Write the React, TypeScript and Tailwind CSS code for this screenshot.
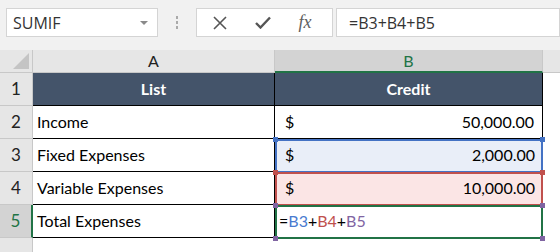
import React from "react";

const cellFont = { fontFamily: "Lato, 'Liberation Sans', sans-serif" };

function Corner({ className }: { className: string }) {
  return <div className={`absolute w-[5px] h-[5px] ${className}`} />;
}

export default function App() {
  return (
    <div className="w-[560px] h-[252px] overflow-hidden bg-white" style={{ fontFamily: "'Open Sans', 'Noto Sans', sans-serif" }}>
      {/* toolbar */}
      <div className="h-[50px] bg-[#f1f1f1] flex items-start pt-[8px]">
        <div className="ml-[6px] w-[152px] h-[29px] bg-white border border-[#d4d4d4] flex items-center justify-between pl-[6px] pr-[8px]">
          <span className="text-[16px] text-[#333]">SUMIF</span>
          <svg width="10" height="6" viewBox="0 0 10 6"><path d="M1 1 L5 5 L9 1 Z" fill="#8a8a8a" /></svg>
        </div>
        <div className="w-[38px] h-[29px] flex flex-col items-center justify-center gap-[2px]">
          <div className="w-[2px] h-[3px] bg-[#aaaaaa]" />
          <div className="w-[2px] h-[3px] bg-[#aaaaaa]" />
          <div className="w-[2px] h-[3px] bg-[#aaaaaa]" />
        </div>
        <div className="w-[137px] h-[29px] bg-white border border-[#d4d4d4] flex items-center">
          <div className="w-[46px] flex justify-center">
            <svg width="14" height="14" viewBox="0 0 14 14"><path d="M1 1 L13 13 M13 1 L1 13" stroke="#555" strokeWidth="1.6" /></svg>
          </div>
          <div className="w-[40px] flex justify-center">
            <svg width="16" height="13" viewBox="0 0 16 13"><path d="M1 7 L5.5 11.5 L15 1.5" stroke="#555" strokeWidth="2.4" fill="none" /></svg>
          </div>
          <div className="w-[44px] flex justify-center">
            <span className="italic text-[18px] text-[#606060]" style={{ fontFamily: "'Liberation Serif', serif" }}>fx</span>
          </div>
        </div>
        <div className="ml-[3px] flex-1 h-[29px] bg-white border border-[#d4d4d4] flex items-center pl-[12px]">
          <span className="text-[16px] text-[#333]">=B3+B4+B5</span>
        </div>
      </div>

      {/* sheet */}
      <div className="relative grid grid-cols-[33px_242px_268px_1fr] grid-rows-[23px_33px_33px_33px_33px_33px_14px]" style={cellFont}>
        {/* header row */}
        <div className="bg-[#e6e6e6] border-r border-b border-[#c8c8c8] relative">
          <svg className="absolute right-[3px] bottom-[3px]" width="16" height="16" viewBox="0 0 16 16"><path d="M16 0 L16 16 L0 16 Z" fill="#c4c4c4" /></svg>
        </div>
        <div className="bg-[#e6e6e6] border-r border-b border-[#c8c8c8] flex items-center justify-center text-[16px] text-[#222]">A</div>
        <div className="bg-[#d3d3d3] border-r border-[#c8c8c8] border-b-2 border-b-[#217346] flex items-center justify-center text-[16px] text-[#217346]">B</div>
        <div className="bg-[#e6e6e6] border-b border-[#c8c8c8]" />

        {/* row 1 */}
        <div className="bg-[#e6e6e6] border-r border-b border-[#c8c8c8] flex items-end justify-center pb-[4px] text-[17px] text-[#222]">1</div>
        <div className="bg-[#44546a] border-r border-b border-black flex items-center justify-center text-white font-bold text-[16px]">List</div>
        <div className="bg-[#44546a] border-r border-b border-black flex items-center justify-center text-white font-bold text-[16px]">Credit</div>
        <div />

        {/* row 2 */}
        <div className="bg-[#e6e6e6] border-r border-b border-[#c8c8c8] flex items-end justify-center pb-[4px] text-[17px] text-[#222]">2</div>
        <div className="border-r border-b border-black flex items-center pl-[4px] text-[16px] text-black">Income</div>
        <div className="border-r border-b border-black flex items-center justify-between pl-[10px] pr-[8px] text-[16px] text-black"><span>$</span><span>50,000.00</span></div>
        <div />

        {/* row 3 */}
        <div className="bg-[#e6e6e6] border-r border-b border-[#c8c8c8] flex items-end justify-center pb-[4px] text-[17px] text-[#222]">3</div>
        <div className="border-r border-b border-black flex items-center pl-[4px] text-[16px] text-black">Fixed Expenses</div>
        <div className="bg-[#e9eef8] border-b border-black flex items-center justify-between pl-[10px] pr-[8px] text-[16px] text-black"><span>$</span><span>2,000.00</span></div>
        <div />

        {/* row 4 */}
        <div className="bg-[#e6e6e6] border-r border-b border-[#c8c8c8] flex items-end justify-center pb-[4px] text-[17px] text-[#222]">4</div>
        <div className="border-r border-b border-black flex items-center pl-[4px] text-[16px] text-black">Variable Expenses</div>
        <div className="bg-[#fbe5e5] border-b border-black flex items-center justify-between pl-[10px] pr-[8px] text-[16px] text-black"><span>$</span><span>10,000.00</span></div>
        <div />

        {/* row 5 */}
        <div className="bg-[#d3d3d3] border-r-2 border-r-[#217346] border-b border-[#c8c8c8] flex items-end justify-center pb-[4px] text-[17px] text-[#217346]">5</div>
        <div className="border-r border-b border-black flex items-center pl-[4px] text-[16px] text-black">Total Expenses</div>
        <div className="border-b border-black flex items-center pl-[4px] text-[16px] text-black">
          <span>=</span><span className="text-[#4a7bd0]">B3</span><span>+</span><span className="text-[#c0504d]">B4</span><span>+</span><span className="text-[#8064a2]">B5</span>
        </div>
        <div />

        {/* row 6 */}
        <div className="bg-[#e6e6e6] border-r border-[#c8c8c8]" />
        <div />
        <div />
        <div />

        {/* range overlays */}
        <div className="absolute left-[275px] top-[89px] w-[268px] h-[34px] border-2 border-[#4472c4]" />
        <Corner className="left-[273px] top-[87px] bg-[#4472c4]" />
        <Corner className="left-[540px] top-[87px] bg-[#4472c4]" />

        <div className="absolute left-[275px] top-[122px] w-[268px] h-[34px] border-2 border-[#c0504d]" />
        <Corner className="left-[273px] top-[120px] bg-[#c0504d]" />
        <Corner className="left-[540px] top-[120px] bg-[#c0504d]" />

        <div className="absolute left-[275px] top-[155px] w-[268px] h-[34px] border-2 border-[#217346]" />
        <Corner className="left-[273px] top-[153px] bg-[#8064a2]" />
        <Corner className="left-[540px] top-[153px] bg-[#8064a2]" />
        <Corner className="left-[273px] top-[186px] bg-[#8064a2]" />
        <Corner className="left-[540px] top-[186px] bg-[#8064a2]" />
      </div>
    </div>
  );
}
